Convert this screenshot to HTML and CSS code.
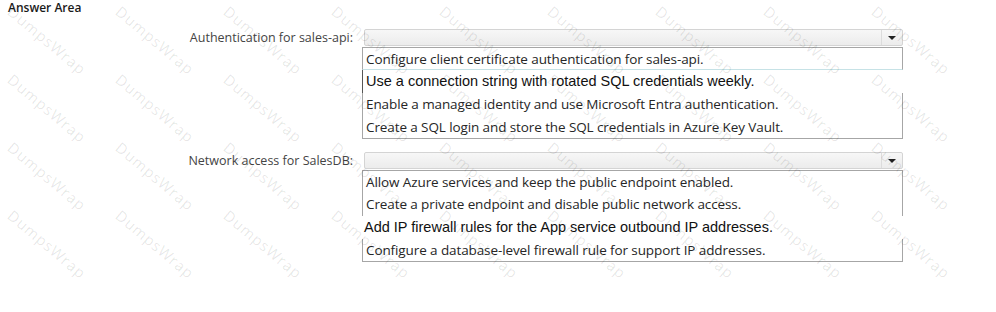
FILE: index.html
```html
<!DOCTYPE html>
<html lang="en">
<head>
    <meta charset="UTF-8">
    <meta name="viewport" content="width=device-width, initial-scale=1.0">
    <title>Answer Area</title>
    <link rel="stylesheet" href="styles.css">
</head>
<body>
    <div class="page">
        <h1 class="title">Answer Area</h1>

        <div class="question">
            <div class="label">Authentication for sales-api:</div>
            <div class="field">
                <div class="select"><span class="arrow"></span></div>
                <ul class="options">
                    <li class="opt top sides sep">Configure client certificate authentication for sales-api.</li>
                    <li class="opt plain cursor">Use a connection string with rotated SQL credentials weekly.</li>
                    <li class="opt sides">Enable a managed identity and use Microsoft Entra authentication.</li>
                    <li class="opt sides bottom">Create a SQL login and store the SQL credentials in Azure Key Vault.</li>
                </ul>
            </div>
        </div>

        <div class="question">
            <div class="label">Network access for SalesDB:</div>
            <div class="field">
                <div class="select"><span class="arrow"></span></div>
                <ul class="options">
                    <li class="opt top sides">Allow Azure services and keep the public endpoint enabled.</li>
                    <li class="opt sides">Create a private endpoint and disable public network access.</li>
                    <li class="opt plain tight">Add IP firewall rules for the App service outbound IP addresses.</li>
                    <li class="opt sides bottom">Configure a database-level firewall rule for support IP addresses.</li>
                </ul>
            </div>
        </div>
    </div>

    <!-- watermark -->
    <div class="watermark">
        <span>DumpsWrap</span><span>DumpsWrap</span><span>DumpsWrap</span><span>DumpsWrap</span><span>DumpsWrap</span><span>DumpsWrap</span><span>DumpsWrap</span><span>DumpsWrap</span><span>DumpsWrap</span>
        <span>DumpsWrap</span><span>DumpsWrap</span><span>DumpsWrap</span><span>DumpsWrap</span><span>DumpsWrap</span><span>DumpsWrap</span><span>DumpsWrap</span><span>DumpsWrap</span><span>DumpsWrap</span>
        <span>DumpsWrap</span><span>DumpsWrap</span><span>DumpsWrap</span><span>DumpsWrap</span><span>DumpsWrap</span><span>DumpsWrap</span><span>DumpsWrap</span><span>DumpsWrap</span><span>DumpsWrap</span>
        <span>DumpsWrap</span><span>DumpsWrap</span><span>DumpsWrap</span><span>DumpsWrap</span><span>DumpsWrap</span><span>DumpsWrap</span><span>DumpsWrap</span><span>DumpsWrap</span><span>DumpsWrap</span>
    </div>
</body>
</html>
```

FILE: styles.css
```css
html { overflow: hidden; }
body { margin: 0; background: #fff; color: #333; font-family: "Open Sans", "Noto Sans", sans-serif; width: 996px; height: 312px; overflow: hidden; position: relative; }

.page { padding: 0 0 0 8px; }
.title { margin: 0; padding-top: 1px; height: 22px; font-size: 12px; font-weight: 600; color: #1a1a1a; line-height: 14px; }

/* question rows */
.question { display: grid; grid-template-columns: 345px 541px; column-gap: 9px; margin-bottom: 13px; }
.question:first-of-type { margin-top: 6px; }
.label { text-align: right; font-size: 12.5px; color: #444; line-height: 16px; padding-top: 1px; }

.field { display: flex; flex-direction: column; }

.select {
    margin-left: 2px;
    height: 15px;
    border: 1px solid #d4d4d4;
    border-radius: 2px;
    background: linear-gradient(#f7f7f7, #ececec);
    display: flex;
    justify-content: flex-end;
    margin-bottom: 1px;
}
.arrow {
    width: 20px;
    border-left: 1px solid #dcdcdc;
    display: flex;
    align-items: center;
    justify-content: center;
}
.arrow::after {
    content: "";
    border-left: 4px solid transparent;
    border-right: 4px solid transparent;
    border-top: 4px solid #222;
}

/* option list */
.options { list-style: none; margin: 0; padding: 0; }
.opt {
    height: 23px;
    line-height: 23px;
    padding-left: 3px;
    font-size: 13.5px;
    letter-spacing: -0.1px;
    color: #262626;
    white-space: nowrap;
    border: 1px solid transparent;
    border-top: 0;
    border-bottom: 0;
}
.opt.top { border-top: 1px solid #a6a6a6; height: 22px; }
.opt.sides { border-left-color: #a6a6a6; border-right-color: #a6a6a6; }
.opt.sep { border-bottom: 1px solid #c6e2e6; height: 21px; }
.opt.bottom { border-bottom: 1px solid #a6a6a6; height: 22px; }
.opt.plain { font-family: "Liberation Sans", Arial, sans-serif; font-size: 14.5px; letter-spacing: 0; color: #111; }
.opt.cursor { border-left-color: #555; }
.opt.tight { padding-left: 1px; }

/* watermark over the page */
.watermark {
    position: absolute;
    top: 2px;
    left: 16px;
    display: grid;
    grid-template-columns: repeat(9, 108px);
    grid-auto-rows: 68px;
    align-items: start;
    justify-items: start;
    pointer-events: none;
}
.watermark span {
    display: block;
    width: max-content;
    transform: rotate(40deg);
    transform-origin: left top;
    font-family: "Open Sans", sans-serif;
    font-size: 15px;
    line-height: 18px;
    color: rgba(0, 0, 0, 0.1);
    letter-spacing: 1px;
}
```
